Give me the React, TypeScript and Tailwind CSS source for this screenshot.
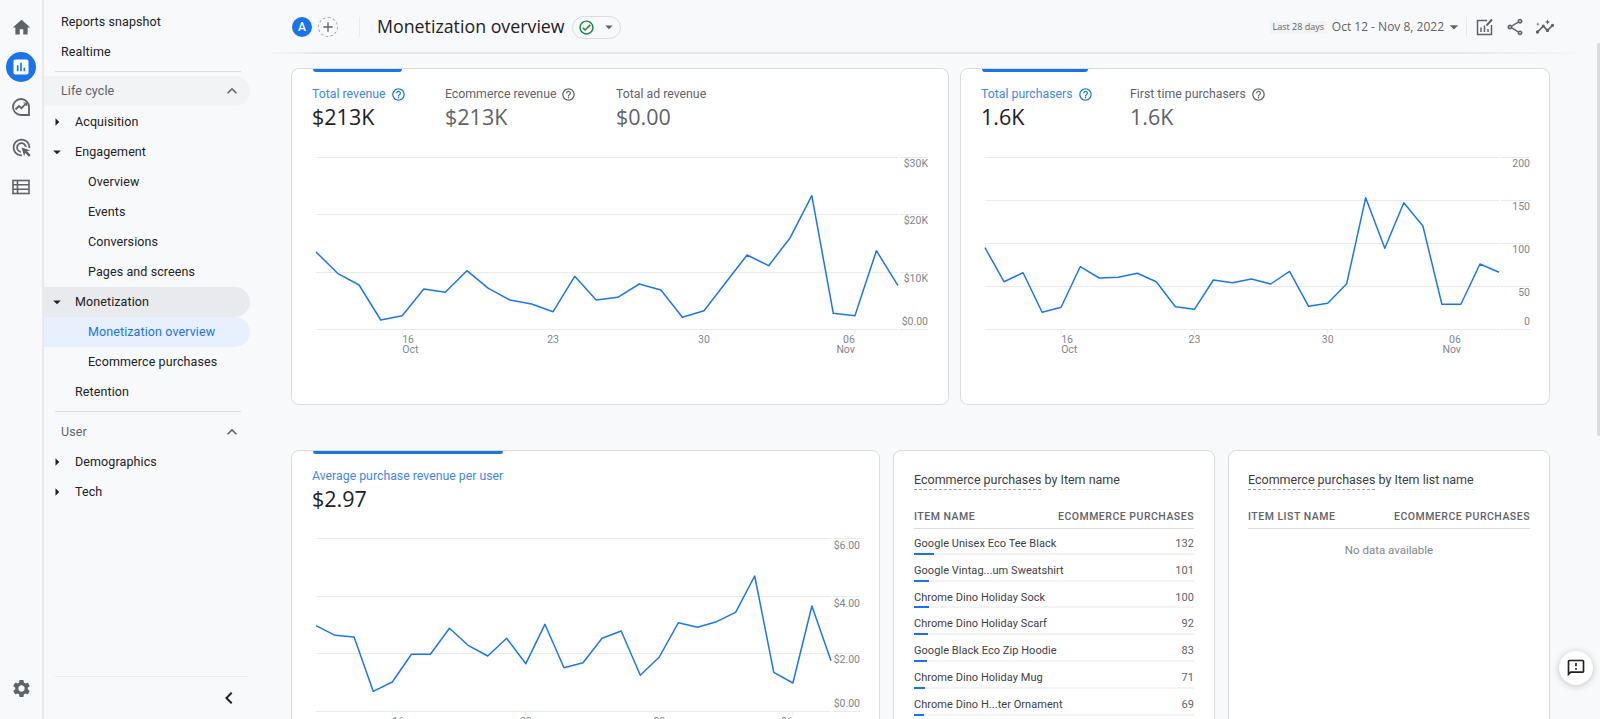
import {
  MdAdd,
  MdArrowDropDown,
  MdArrowRight,
  MdAssessment,
  MdChevronLeft,
  MdExpandLess,
  MdHelpOutline,
  MdHome,
  MdOutlineAdsClick,
  MdOutlineCheckCircle,
  MdOutlineFeedback,
  MdOutlineInsights,
  MdOutlineShare,
  MdSettings,
} from "react-icons/md";

const sans = "font-['Roboto','Liberation_Sans',sans-serif]";
const display = "font-['Open_Sans','Roboto',sans-serif]";

// line values are read off the reference, in svg pixels
const revenue = [336, 400, 435, 540, 527, 447, 457, 392, 445, 480, 492, 515, 409, 480, 472, 432, 450, 532, 512, 428, 345, 377, 293, 167, 520, 527, 332, 437];
const purchasers = [323, 425, 398, 517, 502, 380, 414, 412, 400, 425, 500, 508, 420, 428, 417, 432, 394, 499, 490, 431, 173, 325, 188, 258, 493, 493, 372, 397];
const perUser = [347, 376, 381, 544, 516, 433, 433, 355, 407, 438, 385, 461, 343, 473, 458, 385, 363, 496, 441, 338, 352, 335, 307, 198, 487, 519, 288, 452];

const items = [
  { name: "Google Unisex Eco Tee Black", value: 132 },
  { name: "Google Vintag...um Sweatshirt", value: 101 },
  { name: "Chrome Dino Holiday Sock", value: 100 },
  { name: "Chrome Dino Holiday Scarf", value: 92 },
  { name: "Google Black Eco Zip Hoodie", value: 83 },
  { name: "Chrome Dino Holiday Mug", value: 71 },
  { name: "Chrome Dino H...ter Ornament", value: 69 },
];

type ChartProps = {
  width: number;
  height: number;
  left: number;
  right: number;
  labelEnd: number;
  values: number[];
  grid: number[];
  yLabels: { text: string; y: number }[];
  xBase: number;
};

function Chart({ width, height, left, right, labelEnd, values, grid, yLabels, xBase }: ChartProps) {
  const step = (right - left) / (values.length - 1);
  const ticks = [4, 11, 18, 25];
  const bottom = grid[grid.length - 1];
  const points = values.map((v, i) => `${(left + i * step).toFixed(1)},${v.toFixed(1)}`).join(" ");

  return (
    <svg width={width} height={height} className="block shrink-0">
      {grid.map((y) => (
        <g key={y} stroke="#e8eaed">
          <line x1={left} x2={right} y1={y + 0.5} y2={y + 0.5} />
          <line x1={right + 2} x2={labelEnd} y1={y + 0.5} y2={y + 0.5} />
        </g>
      ))}
      {ticks.map((t) => (
        <line key={t} x1={left + t * step} x2={left + t * step} y1={bottom} y2={bottom + 5} stroke="#e8eaed" />
      ))}
      <polyline points={points} fill="none" stroke="#1c76ee" strokeWidth="1.5" strokeLinejoin="round" />
      <g fontFamily="Roboto, sans-serif" fontSize="10.5" fill="#80868b">
        {yLabels.map((l) => (
          <text key={l.text} x={labelEnd} y={l.y} textAnchor="end">
            {l.text}
          </text>
        ))}
        <text x={left + 4 * step} y={xBase}>16</text>
        <text x={left + 4 * step} y={xBase + 10}>Oct</text>
        <text x={left + 11 * step} y={xBase} textAnchor="middle">23</text>
        <text x={left + 18 * step} y={xBase} textAnchor="middle">30</text>
        <text x={left + 25 * step} y={xBase} textAnchor="end">06</text>
        <text x={left + 25 * step} y={xBase + 10} textAnchor="end">Nov</text>
      </g>
    </svg>
  );
}

function NavRow({ label, indent = "top", caret, active, tone }: { label: string; indent?: "top" | "sub" | "child"; caret?: "right" | "down"; active?: boolean; tone?: "group" }) {
  const pad = indent === "top" ? "pl-[17px]" : indent === "child" ? "pl-[44px]" : "pl-[3px]";
  return (
    <div
      className={`flex h-[30px] w-[206px] items-center gap-[8px] rounded-r-full text-[12.5px] tracking-[0.1px] ${pad} ${
        active ? "bg-[#e8f0fe] text-[#1a73e8]" : tone === "group" ? "bg-[#e8eaed] text-[#202124]" : "text-[#202124]"
      }`}
    >
      {caret && (
        <span className="flex w-[20px] shrink-0 justify-center text-[#202124]">
          {caret === "right" ? <MdArrowRight size={18} /> : <MdArrowDropDown size={18} />}
        </span>
      )}
      {indent === "sub" && !caret && <span className="w-[20px] shrink-0" />}
      <span>{label}</span>
    </div>
  );
}

function SectionRow({ label, filled }: { label: string; filled?: boolean }) {
  return (
    <div className={`flex h-[30px] w-[206px] items-center justify-between rounded-r-full pl-[17px] pr-[8px] text-[12.5px] tracking-[0.1px] text-[#5f6368] ${filled ? "bg-[#f1f3f4]" : ""}`}>
      <span>{label}</span>
      <MdExpandLess size={20} className="text-[#5f6368]" />
    </div>
  );
}

function TrendIcon() {
  return (
    <svg width="20" height="20" viewBox="0 0 20 20" fill="none" stroke="#5f6368" strokeWidth="1.8">
      <path d="M18 18H10a8 8 0 1 1 8-8z" />
      <path d="M4.5 12.5 8 9l2.5 2.2L15 6.5" stroke="#5f6368" />
      <path d="M12.5 6h3v3" strokeWidth="1.2" />
    </svg>
  );
}

function ListIcon() {
  return (
    <svg width="18" height="16" viewBox="0 0 18 16" fill="none" stroke="#5f6368" strokeWidth="1.6">
      <rect x="1" y="1.5" width="16" height="13" />
      <path d="M1 5.8h16M1 10.2h16M5.5 1.5v13" />
    </svg>
  );
}

function EditReportIcon() {
  return (
    <svg width="18" height="18" viewBox="0 0 18 18" fill="none" stroke="#5f6368" strokeWidth="1.5">
      <path d="M11 2.5H1.5v14h14V7" />
      <path d="M5 14V9.5M8.5 14V7.5M12 14v-3" />
      <path d="M10.5 7.5 16 1.5" strokeWidth="2" />
    </svg>
  );
}

function Rail() {
  return (
    <aside className="flex h-full w-[44px] shrink-0 flex-col items-center border-r-2 border-[#e8eaed] pt-[7px] pb-[20px]">
      <div className="flex h-[40px] items-center justify-center">
        <MdHome size={21} className="text-[#5f6368]" />
      </div>
      <div className="flex h-[40px] items-center justify-center">
        <div className="flex h-[30px] w-[30px] items-center justify-center rounded-full bg-[#1a73e8]">
          <MdAssessment size={20} className="text-white" />
        </div>
      </div>
      <div className="flex h-[40px] items-center justify-center">
        <TrendIcon />
      </div>
      <div className="flex h-[40px] items-center justify-center">
        <MdOutlineAdsClick size={21} className="text-[#5f6368]" />
      </div>
      <div className="flex h-[40px] items-center justify-center">
        <ListIcon />
      </div>
      <MdSettings size={21} className="mt-auto text-[#5f6368]" />
    </aside>
  );
}

function Sidebar() {
  return (
    <nav className={`flex h-full w-[248px] shrink-0 flex-col pt-[7px] ${sans}`}>
      <NavRow label="Reports snapshot" />
      <NavRow label="Realtime" />
      <div className="mx-[11px] mt-[4px] mb-[4px] w-[186px] border-t border-[#dadce0]" />
      <SectionRow label="Life cycle" filled />
      <div className="h-px" />
      <NavRow label="Acquisition" indent="sub" caret="right" />
      <NavRow label="Engagement" indent="sub" caret="down" />
      <NavRow label="Overview" indent="child" />
      <NavRow label="Events" indent="child" />
      <NavRow label="Conversions" indent="child" />
      <NavRow label="Pages and screens" indent="child" />
      <NavRow label="Monetization" indent="sub" caret="down" tone="group" />
      <NavRow label="Monetization overview" indent="child" active />
      <NavRow label="Ecommerce purchases" indent="child" />
      <NavRow label="Retention" indent="sub" />
      <div className="mx-[11px] mt-[4px] mb-[5px] w-[186px] border-t border-[#dadce0]" />
      <SectionRow label="User" />
      <NavRow label="Demographics" indent="sub" caret="right" />
      <NavRow label="Tech" indent="sub" caret="right" />
      <div className="mt-auto ml-[11px] flex h-[43px] w-[193px] items-center justify-end border-t border-[#e8eaed] pr-[7px]">
        <MdChevronLeft size={24} className="text-[#202124]" />
      </div>
    </nav>
  );
}

function Header() {
  return (
    <header className="relative flex h-[54px] shrink-0 items-center pr-[45px]">
      <div className={`flex h-[20px] w-[20px] items-center justify-center rounded-full bg-[#1a73e8] text-[12px] font-medium text-white ${sans}`}>A</div>
      <div className="ml-[6px] flex h-[20px] w-[20px] items-center justify-center rounded-full border border-dashed border-[#9aa0a6]">
        <MdAdd size={16} className="text-[#5f6368]" />
      </div>
      <div className="ml-[21px] h-[20px] border-l border-[#e8eaed]" />
      <h1 className={`ml-[17px] text-[17.8px] leading-none text-[#202124] ${display}`}>Monetization overview</h1>
      <div className="ml-[7px] flex h-[23px] w-[49px] items-center rounded-full border border-[#dadce0] pl-[5px]">
        <MdOutlineCheckCircle size={17} className="text-[#188038]" />
        <MdArrowDropDown size={18} className="ml-[5px] text-[#5f6368]" />
      </div>
      <div className="ml-auto flex items-center">
        <span className={`flex h-[13px] w-[57px] items-center justify-center bg-[#f1f3f4] text-[9px] text-[#5f6368] ${display}`}>Last 28 days</span>
        <span className={`ml-[5px] text-[12px] font-medium text-[#5f6368] ${display}`}>Oct 12 - Nov 8, 2022</span>
        <MdArrowDropDown size={20} className="text-[#5f6368]" />
        <div className="ml-[2px] h-[20px] border-l border-[#e8eaed]" />
        <span className="ml-[9px] flex w-[18px] justify-center">
          <EditReportIcon />
        </span>
        <MdOutlineShare size={20} className="ml-[11px] text-[#5f6368]" />
        <MdOutlineInsights size={20} className="ml-[10px] text-[#5f6368]" />
      </div>
      <div className="absolute bottom-0 left-[-28px] right-[10px] h-[2px] bg-[linear-gradient(to_right,transparent,#e4e6e9_4%,#e4e6e9_90%,transparent)]" />
    </header>
  );
}

function Metric({ label, value, active, help, className }: { label: string; value: string; active?: boolean; help?: boolean; className: string }) {
  return (
    <div className={className}>
      <div className={`flex h-[16px] items-center gap-[5px] text-[12.3px] ${active ? "text-[#4285f4]" : "text-[#5f6368]"}`}>
        <span>{label}</span>
        {help && <MdHelpOutline size={15} className={active ? "text-[#1a73e8]" : "text-[#5f6368]"} />}
      </div>
      <div className={`mt-[-1px] text-[21.5px] leading-[32px] ${display} ${active ? "text-[#202124]" : "text-[#5f6368]"}`}>{value}</div>
    </div>
  );
}

function Tab({ className }: { className: string }) {
  return <div className={`absolute top-[-1px] h-[4px] rounded-b-[3px] bg-[#1a73e8] ${className}`} />;
}

function TableHead({ left }: { left: string }) {
  return (
    <div className="mt-[17px] flex h-[23px] items-center justify-between border-b border-[#dadce0] text-[10.5px] font-medium uppercase tracking-[0.5px] text-[#5f6368]">
      <span>{left}</span>
      <span>Ecommerce purchases</span>
    </div>
  );
}

function TableTitle({ dim }: { dim: string }) {
  return (
    <div className="h-[17px] text-[12.5px] leading-[16px] text-[#3c4043]">
      <span className="border-b border-dashed border-[#9aa0a6] pb-[2px]">Ecommerce purchases</span>
      <span> by </span>
      <span className="border-b border-dashed border-[#e8eaed] pb-[2px]">{dim}</span>
    </div>
  );
}

export default function App() {
  const cardBase = "relative overflow-hidden rounded-[8px] border border-[#dadce0] bg-white";

  return (
    <div className={`relative flex h-[719px] w-full overflow-hidden bg-[#f8f9fb] ${sans}`}>
      <Rail />
      <Sidebar />
      <main className="flex min-w-0 flex-1 flex-col">
        <Header />
        <div className="-ml-px pt-[14px] pr-[50px]">
          <div className="flex gap-[11px]">
            <section className={`${cardBase} h-[337px] w-[658px]`}>
              <Tab className="left-[21px] w-[89px]" />
              <div className="flex h-[81px] pt-[17px]">
                <Metric className="ml-[20px] w-[133px]" label="Total revenue" value="$213K" active help />
                <Metric className="w-[171px]" label="Ecommerce revenue" value="$213K" help />
                <Metric className="" label="Total ad revenue" value="$0.00" />
              </div>
              <Chart
                width={656}
                height={230}
                left={24}
                right={606}
                labelEnd={636}
                values={revenue.map((p) => p / 3 - 10)}
                grid={[7, 64, 122, 179]}
                yLabels={[
                  { text: "$30K", y: 17 },
                  { text: "$20K", y: 74 },
                  { text: "$10K", y: 132 },
                  { text: "$0.00", y: 175 },
                ]}
                xBase={193}
              />
            </section>
            <section className={`${cardBase} h-[337px] w-[590px]`}>
              <Tab className="left-[21px] w-[106px]" />
              <div className="flex h-[81px] pt-[17px]">
                <Metric className="ml-[20px] w-[149px]" label="Total purchasers" value="1.6K" active help />
                <Metric className="" label="First time purchasers" value="1.6K" help />
              </div>
              <Chart
                width={588}
                height={230}
                left={24}
                right={538}
                labelEnd={569}
                values={purchasers.map((p) => p / 3 - 10)}
                grid={[7, 50, 93, 136, 179]}
                yLabels={[
                  { text: "200", y: 17 },
                  { text: "150", y: 60 },
                  { text: "100", y: 103 },
                  { text: "50", y: 146 },
                  { text: "0", y: 175 },
                ]}
                xBase={193}
              />
            </section>
          </div>

          <div className="mt-[45px] flex gap-[13px]">
            <section className={`${cardBase} h-[320px] w-[589px]`}>
              <Tab className="left-[21px] w-[190px]" />
              <div className="flex h-[79px] pt-[17px]">
                <Metric className="ml-[20px]" label="Average purchase revenue per user" value="$2.97" active />
              </div>
              <Chart
                width={587}
                height={230}
                left={24}
                right={539}
                labelEnd={568}
                values={perUser.map((p) => p / 3 - 20)}
                grid={[8, 66, 123, 181]}
                yLabels={[
                  { text: "$6.00", y: 19 },
                  { text: "$4.00", y: 77 },
                  { text: "$2.00", y: 133 },
                  { text: "$0.00", y: 177 },
                ]}
                xBase={195}
              />
            </section>

            <section className={`${cardBase} h-[320px] w-[322px] px-[20px] pt-[21px]`}>
              <TableTitle dim="Item name" />
              <TableHead left="Item name" />
              <div className="-mt-px">
                {items.map((item) => (
                  <div key={item.name}>
                    <div className="flex h-[24.8px] justify-between pt-[6px] text-[11px] leading-[19px] tracking-[0.05px] text-[#3c4043]">
                      <span>{item.name}</span>
                      <span className="text-[#5f6368]">{item.value}</span>
                    </div>
                    <div className="h-[2px] bg-[#f1f3f4]">
                      <div className="h-[2px] bg-[#1a73e8]" style={{ width: `${(item.value / 132) * 20}px` }} />
                    </div>
                  </div>
                ))}
              </div>
            </section>

            <section className={`${cardBase} h-[320px] w-[322px] px-[19px] pt-[21px]`}>
              <TableTitle dim="Item list name" />
              <TableHead left="Item list name" />
              <div className="pt-[12px] text-center text-[11.5px] leading-[18px] text-[#80868b]">No data available</div>
            </section>
          </div>
        </div>
      </main>

      <div className="absolute right-0 top-[43px] h-[393px] w-[3px] rounded-l-[2px] bg-[#dadce0]" />
      <button className="absolute right-[7px] top-[651px] flex h-[34px] w-[34px] items-center justify-center rounded-full bg-white shadow-[0_1px_6px_rgba(60,64,67,0.3)]">
        <MdOutlineFeedback size={20} className="text-[#202124]" />
      </button>
    </div>
  );
}
